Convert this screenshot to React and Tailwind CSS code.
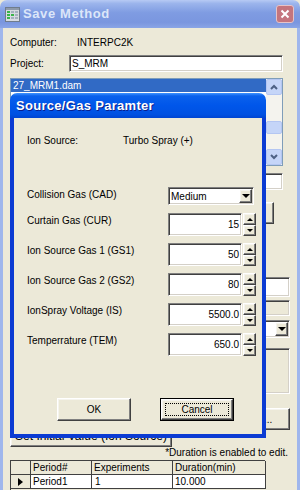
import React from "react"

const sunken = "border border-t-[#808080] border-l-[#808080] border-b-white border-r-white shadow-[inset_1px_1px_0_#404040,inset_-1px_-1px_0_#d4d0c8]"
const raised = "bg-[#ece9d8] border border-t-white border-l-white border-b-[#404040] border-r-[#404040] shadow-[inset_-1px_-1px_0_#808080,inset_1px_1px_0_#f5f4ee]"

function TriUp() {
  return <div className="w-0 h-0 border-x-[3px] border-x-transparent border-b-[3px] border-b-black" />
}

function TriDown() {
  return <div className="w-0 h-0 border-x-[3px] border-x-transparent border-t-[3px] border-t-black" />
}

function ComboArrow() {
  return <div className="w-0 h-0 border-x-[4px] border-x-transparent border-t-[4px] border-t-black" />
}

function ScrollBtn({ down }) {
  return (
    <div className="h-[16px] bg-[#c5d5f8] border border-[#b4c6f2] rounded-[2px] flex items-center justify-center">
      <svg width="8" height="6" viewBox="0 0 8 6">
        <polyline points={down ? "1,1 4,4 7,1" : "1,5 4,2 7,5"} fill="none" stroke="#4d6185" strokeWidth="2" />
      </svg>
    </div>
  )
}

function Spin({ value }) {
  return (
    <div className="flex h-[23px]">
      <div className={`${sunken} bg-white w-[74px] flex items-center justify-end pr-[2px]`}>{value}</div>
      <div className="flex flex-col w-[13px] ml-px">
        <div className={`${raised} h-[12px] flex items-center justify-center`}><TriUp /></div>
        <div className={`${raised} flex-1 flex items-center justify-center`}><TriDown /></div>
      </div>
    </div>
  )
}

function Row({ label, children }) {
  return (
    <div className="flex items-start">
      <div className="w-[141px] h-[14px] leading-[14px] mt-[1px]">{label}</div>
      {children}
    </div>
  )
}

function SaveIcon() {
  return (
    <svg width="15" height="15" viewBox="0 0 15 15">
      <rect x="0.5" y="0.5" width="14" height="14" fill="#d7dbe2" stroke="#6f7c8c" />
      <rect x="1" y="1" width="13" height="2" fill="#8e9aab" />
      <rect x="2" y="4" width="3" height="2" fill="#39b54a" />
      <rect x="2" y="7" width="3" height="2" fill="#39b54a" />
      <rect x="2" y="10" width="3" height="2" fill="#39b54a" />
      <rect x="6" y="4" width="3" height="2" fill="#a6b1bf" />
      <rect x="6" y="7" width="3" height="2" fill="#39b54a" />
      <rect x="6" y="10" width="3" height="2" fill="#a6b1bf" />
      <rect x="10" y="4" width="3" height="2" fill="#a6b1bf" />
      <rect x="10" y="7" width="3" height="2" fill="#a6b1bf" />
      <rect x="10" y="10" width="3" height="2" fill="#a6b1bf" />
    </svg>
  )
}

export default function App() {
  return (
    <div className="relative w-[300px] h-[490px] overflow-hidden font-['Liberation_Sans',Arial,sans-serif] text-[10px] text-black bg-[#ece9d8]">
      {/* parent window, inactive */}
      <div className="flex flex-col h-full">
        <div className="h-[28px] shrink-0 rounded-t-[7px] bg-[linear-gradient(to_bottom,#b7caf4_0%,#9cb5ec_12%,#7f9ce2_45%,#7a96df_80%,#8aa5e6_100%)] flex items-center pl-[5px] pr-[6px]">
          <SaveIcon />
          <div className="ml-[3px] flex-1 text-[13px] font-bold text-[#dce6f9] tracking-[0.6px]">Save Method</div>
          <div className="w-[18px] h-[18px] rounded-[3px] bg-[#c4757e] border border-[#e6c3c7] flex items-center justify-center">
            <svg width="10" height="10" viewBox="0 0 10 10">
              <path d="M1.5 1.5 L8.5 8.5 M8.5 1.5 L1.5 8.5" stroke="#fff" strokeWidth="2" />
            </svg>
          </div>
        </div>

        <div className="flex-1 flex flex-col border-x-[3px] border-[#9fb6ec] pl-[7px] pr-[7px]">
          <div className="mt-[7px] h-[14px] flex items-center">
            <span className="w-[67px]">Computer:</span>
            <span>INTERPC2K</span>
          </div>
          <div className="mt-[6px] h-[17px] flex items-center mr-[7px]">
            <span className="w-[59px]">Project:</span>
            <div className={`${sunken} bg-white flex-1 h-full flex items-center pl-[2px]`}>S_MRM</div>
          </div>
          <div className="mt-[6px] h-[88px] mr-[7px] border border-[#7f9db9] bg-white flex">
            <div className="flex-1">
              <div className="h-[13px] bg-[#316ac5] text-white pl-[2px] leading-[13px]">27_MRM1.dam</div>
            </div>
            <div className="w-[16px] flex flex-col bg-[#f4f3ee]">
              <ScrollBtn />
              <div className="h-[26px]" />
              <div className="h-[13px] bg-[#c5d5f8] border border-[#b4c6f2] rounded-[2px]" />
              <div className="flex-1" />
              <ScrollBtn down />
            </div>
          </div>

          <div className="h-[281px] flex">
            <div className="flex-1 flex flex-col justify-end">
              <div className={`${raised} w-[162px] h-[22px] flex items-center justify-center text-[12px]`}>Set Initial Value (Ion Source)</div>
            </div>
            <div className="w-[40px] flex flex-col">
              <div className={`${sunken} bg-white mt-[7px] h-[17px] w-[33px]`} />
              <div className={`${raised} mt-[12px] h-[22px] w-[24px]`} />
              <div className={`${sunken} bg-white mt-[53px] h-[20px]`} />
              <div className={`${sunken} bg-[#ece9d8] mt-[3px] h-[16px]`} />
              <div className={`${sunken} bg-white mt-[4px] h-[18px] flex items-center justify-end pr-px`}>
                <div className={`${raised} w-[13px] h-[14px] flex items-center justify-center`}><ComboArrow /></div>
              </div>
              <div className={`${sunken} bg-[#ece9d8] mt-[10px] h-[46px]`} />
              <div className={`${raised} mt-[14px] h-[22px] flex items-center pl-[13px]`}>...</div>
            </div>
          </div>

          <div className="h-[11px] leading-[11px] text-right pr-[2px]">*Duration is enabled to edit.</div>

          <div className="mt-[2px] w-[255px] flex-1 border-l border-t border-[#404040] bg-[#ece9d8]">
            <div className="grid grid-cols-[20px_61px_81px_93px] h-[14px] leading-[13px]">
              <div className="border-r border-b border-[#404040]" />
              <div className="border-r border-b border-[#404040] pl-[2px]">Period#</div>
              <div className="border-r border-b border-[#404040] pl-[2px]">Experiments</div>
              <div className="border-r border-b border-[#404040] pl-[2px]">Duration(min)</div>
            </div>
            <div className="grid grid-cols-[20px_61px_81px_93px] h-[14px] leading-[13px]">
              <div className="border-r border-b border-[#404040] flex items-center justify-center">
                <div className="w-0 h-0 border-y-[4px] border-y-transparent border-l-[5px] border-l-black" />
              </div>
              <div className="border-r border-b border-[#404040] bg-white pl-[2px]">Period1</div>
              <div className="border-r border-b border-[#404040] bg-white pl-[3px]">1</div>
              <div className="border-r border-b border-[#404040] bg-white pl-[2px]">10.000</div>
            </div>
          </div>
        </div>
      </div>

      {/* child dialog, active */}
      <div className="absolute left-[10px] top-[93px] w-[256px] h-[345px] flex flex-col">
        <div className="h-[25px] shrink-0 rounded-t-[7px] bg-[linear-gradient(to_bottom,#3f93ff_0%,#0a61ec_12%,#0056ea_50%,#0051e2_85%,#0045d2_100%)] flex items-center pl-[6px]">
          <span className="text-[13px] font-bold text-white tracking-[0.3px] [text-shadow:1px_1px_0_#0a1e8c]">Source/Gas Paramter</span>
        </div>
        <div className="flex-1 flex flex-col border-x-4 border-b-4 border-[#0b3bd3] bg-[#ece9d8] pl-[13px]">
          <div className="mt-[15px] h-[14px] flex items-center">
            <span className="w-[96px]">Ion Source:</span>
            <span>Turbo Spray (+)</span>
          </div>
          <div className="mt-[40px]">
            <Row label="Collision Gas (CAD)">
              <div className={`${sunken} bg-white w-[86px] h-[18px] flex items-center pl-[2px] pr-px`}>
                <span className="flex-1">Medium</span>
                <div className={`${raised} w-[13px] h-[14px] flex items-center justify-center`}><ComboArrow /></div>
              </div>
            </Row>
          </div>
          <div className="mt-[8px] flex flex-col gap-[7px]">
            <Row label="Curtain Gas (CUR)"><Spin value="15" /></Row>
            <Row label="Ion Source Gas 1 (GS1)"><Spin value="50" /></Row>
            <Row label="Ion Source Gas 2 (GS2)"><Spin value="80" /></Row>
            <Row label="IonSpray Voltage (IS)"><Spin value="5500.0" /></Row>
            <Row label="Temperrature (TEM)"><Spin value="650.0" /></Row>
          </div>
          <div className="mt-[42px] flex ml-[30px] gap-[29px]">
            <div className={`${raised} w-[74px] h-[23px] flex items-center justify-center`}>OK</div>
            <div className="w-[74px] h-[23px] border border-black">
              <div className={`${raised} w-full h-full p-[3px]`}>
                <div className="w-full h-full border border-dotted border-black flex items-center justify-center">Cancel</div>
              </div>
            </div>
          </div>
        </div>
      </div>
    </div>
  )
}
